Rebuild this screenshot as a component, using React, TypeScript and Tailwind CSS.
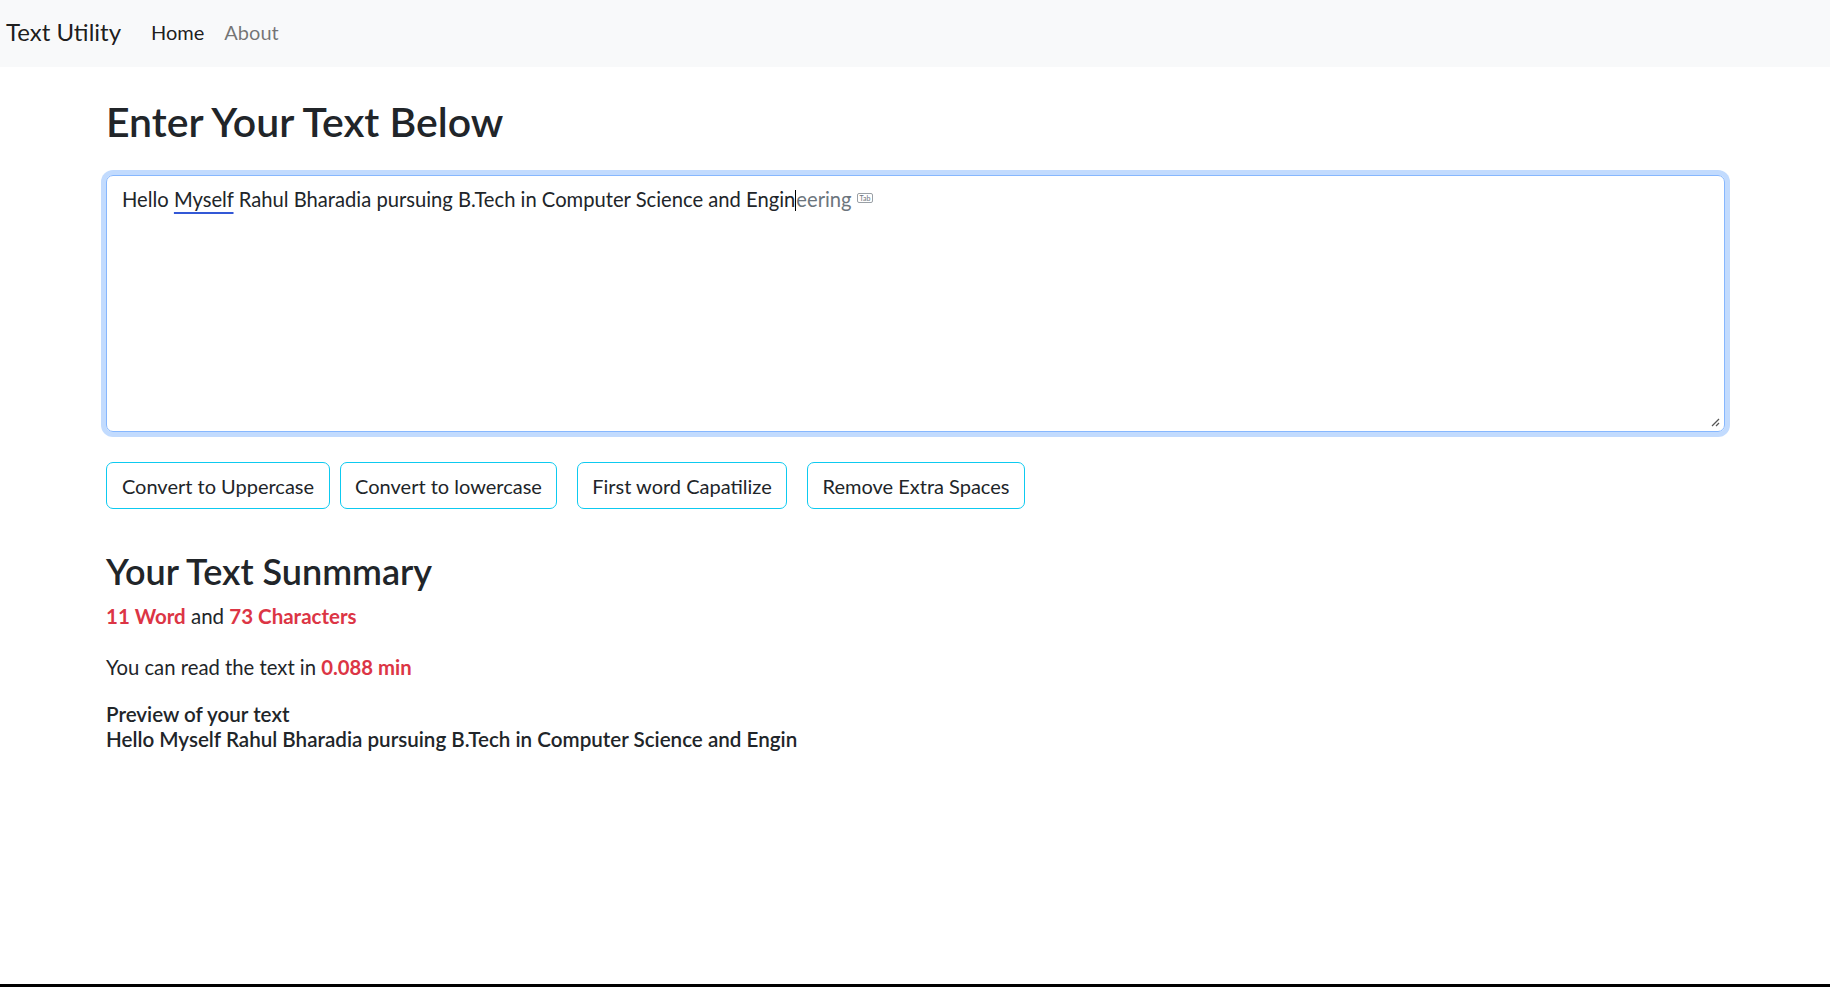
import React from "react";

export default function App() {
  const font = { fontFamily: 'Lato, "Liberation Sans", sans-serif' };
  return (
    <div className="h-[987px] flex flex-col bg-white text-[#212529]" style={font}>
      <nav className="h-[67px] shrink-0 bg-[#f8f9fa] flex items-center pl-[6px] pb-[4px]">
        <span className="text-[24px] leading-[37px] text-black/90">Text Utility</span>
        <span className="ml-[30px] text-[20px] leading-[30px] text-black/90">Home</span>
        <span className="ml-[20px] text-[20px] leading-[30px] text-black/55">About</span>
      </nav>
      <main className="flex-1 w-[1650px] mx-auto pl-[16px] pr-[15px] pt-[25px]">
        <h1 className="text-[41px] leading-[60px] font-semibold mb-[23px]">Enter Your Text Below</h1>
        <div className="relative h-[257px] border border-[#86b7fe] rounded-[7px] shadow-[0_0_0_5px_rgba(13,110,253,0.25)] pl-[15px] pt-[8px] text-[20.2px] leading-[30px]">
          <span>Hello </span>
          <span className="underline decoration-[#3358d6] decoration-[1.5px] underline-offset-[5px]">Myself</span>
          <span> Rahul Bharadia pursuing B.Tech in Computer Science and Engin</span>
          <span className="inline-block w-[1px] h-[21px] bg-black align-[-4px]"></span>
          <span className="text-[#6c757d]">eering</span>
          <span className="inline-block ml-[5px] align-[6px] border border-[#9aa0a6] rounded-[2px] px-[2px] text-[7px] leading-[8px] text-[#6c757d]">Tab</span>
          <svg className="absolute right-[4px] bottom-[4px]" width="10" height="10" viewBox="0 0 10 10">
            <line x1="9" y1="2" x2="2" y2="9" stroke="#555" strokeWidth="1.2" />
            <line x1="9" y1="6" x2="6" y2="9" stroke="#555" strokeWidth="1.2" />
          </svg>
        </div>
        <div className="flex mt-[30px] text-[20px] leading-[30px]">
          <button className="w-[224px] h-[47px] border border-[#0dcaf0] rounded-[7px] bg-white text-[#212529]">Convert to Uppercase</button>
          <button className="ml-[10px] w-[217px] h-[47px] border border-[#0dcaf0] rounded-[7px] bg-white text-[#212529]">Convert to lowercase</button>
          <button className="ml-[20px] w-[210px] h-[47px] border border-[#0dcaf0] rounded-[7px] bg-white text-[#212529]">First word Capatilize</button>
          <button className="ml-[20px] w-[218px] h-[47px] border border-[#0dcaf0] rounded-[7px] bg-white text-[#212529]">Remove Extra Spaces</button>
        </div>
        <h2 className="mt-[38px] text-[36px] leading-[48px] font-semibold">Your Text Sunmmary</h2>
        <p className="mt-[6px] text-[20.5px] leading-[30px]">
          <span className="font-bold text-[#dc3545]">11 Word</span> and{" "}
          <span className="font-bold text-[#dc3545]">73 Characters</span>
        </p>
        <p className="mt-[21px] text-[20.3px] leading-[30px]">
          You can read the text in <span className="font-bold text-[#dc3545]">0.088 min</span>
        </p>
        <div className="mt-[20px] text-[20.6px] leading-[25px] font-semibold">
          <div>Preview of your text</div>
          <div>Hello Myself Rahul Bharadia pursuing B.Tech in Computer Science and Engin</div>
        </div>
      </main>
      <div className="h-[3px] bg-black shrink-0"></div>
    </div>
  );
}
